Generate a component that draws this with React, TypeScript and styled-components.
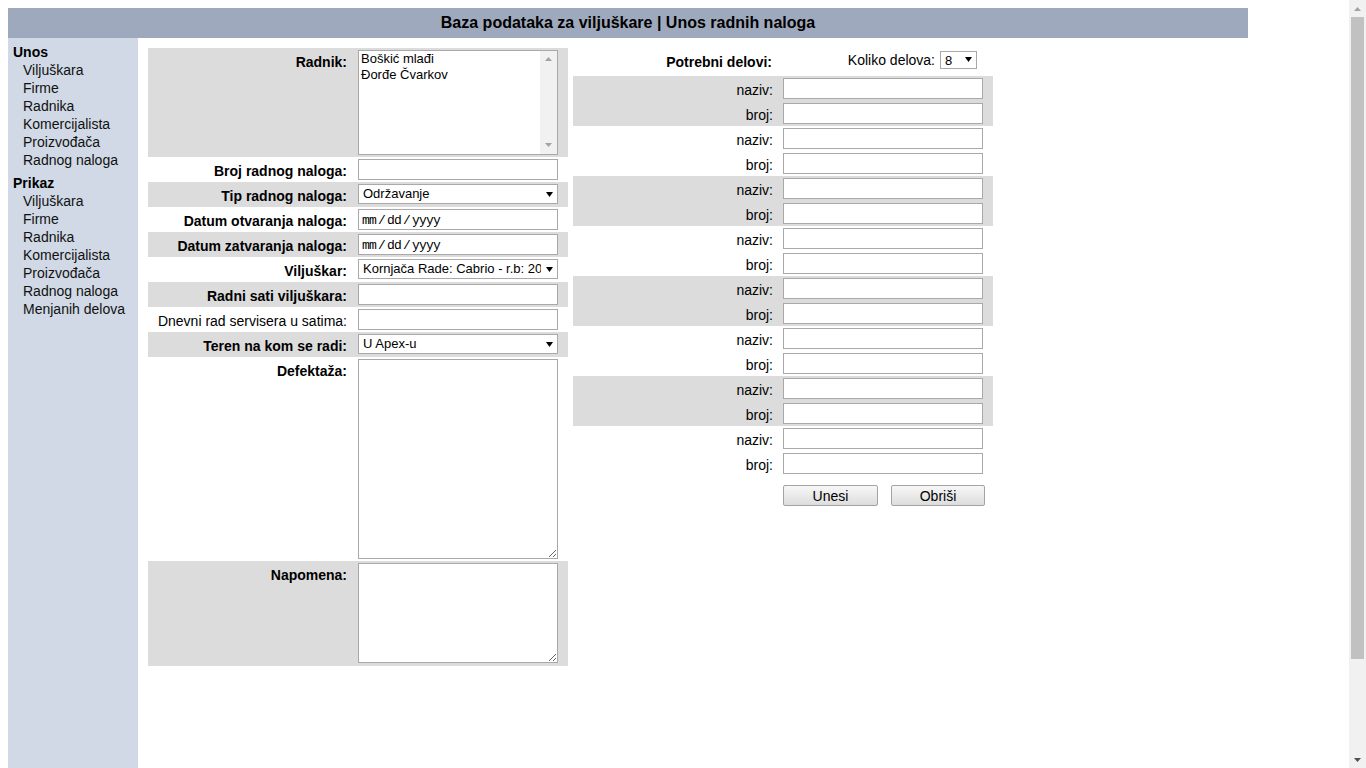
import React from "react";
import styled, { createGlobalStyle, css } from "styled-components";

const GlobalStyle = createGlobalStyle`
  html, body { margin: 0; padding: 0; }
  body {
    margin: 8px;
    background: #ffffff;
    font-family: "Liberation Sans", Arial, sans-serif;
    font-size: 14px;
    color: #000;
  }
`;

const Header = styled.h1`
  width: 1240px;
  height: 30px;
  margin: 0;
  background: #9fa9bd;
  font-size: 16px;
  font-weight: bold;
  line-height: 29px;
  text-align: center;
  color: #000;
`;

const Layout = styled.div`
  width: 1240px;
  height: 832px;
  display: flex;
  align-items: stretch;
`;

const Sidebar = styled.nav`
  width: 130px;
  flex: none;
  background: #d0d9e5;
  padding: 5px 0 0 5px;
  box-sizing: border-box;
  display: flex;
  flex-direction: column;
  gap: 5px;
`;

const NavGroup = styled.div`
  display: flex;
  flex-direction: column;
`;

const NavTitle = styled.div`
  font-weight: bold;
  font-size: 14px;
  line-height: 18px;
`;

const NavLink = styled.a`
  display: block;
  padding-left: 10px;
  font-size: 14px;
  line-height: 18px;
  color: #111;
  text-decoration: none;
`;

const Content = styled.main`
  flex: 1;
  display: flex;
  align-items: flex-start;
  gap: 5px;
  padding: 10px 0 0 10px;
`;

const Table = styled.div`
  width: 420px;
  display: flex;
  flex-direction: column;
`;

const shade = css<{ $shade?: boolean }>`
  background: ${(p) => (p.$shade ? "#dcdcdc" : "transparent")};
`;

const FormRow = styled.div<{ $shade?: boolean; $pb?: number }>`
  display: grid;
  grid-template-columns: 210px 200px;
  min-height: 25px;
  box-sizing: border-box;
  padding: 2px 0 ${(p) => p.$pb ?? 2}px 0;
  ${shade}
`;

const Label = styled.label<{ $plain?: boolean; $pt?: number }>`
  text-align: right;
  padding: ${(p) => p.$pt ?? 4}px 11px 0 0;
  font-size: 14px;
  line-height: 16px;
  font-weight: ${(p) => (p.$plain ? "normal" : "bold")};
  white-space: nowrap;
`;

const fieldBase = css`
  box-sizing: border-box;
  width: 200px;
  margin: 0;
  border: 1px solid #a9a9a9;
  border-radius: 0;
  background: #fff;
  font-family: "Liberation Sans", Arial, sans-serif;
  font-size: 13px;
  color: #000;
  outline: none;
`;

const TextInput = styled.input`
  ${fieldBase}
  height: 21px;
  padding: 1px 3px;
`;

const DateInput = styled.input`
  ${fieldBase}
  height: 21px;
  padding: 2px 3px 0 3px;
  font-family: "Liberation Mono", "DejaVu Sans Mono", monospace;
  font-size: 13px;
  letter-spacing: -0.8px;
  word-spacing: -5px;
`;

const TextArea = styled.textarea<{ $h: number }>`
  ${fieldBase}
  height: ${(p) => p.$h}px;
  padding: 2px;
  resize: both;
  display: block;
`;

const SelectWrap = styled.div<{ $w?: number }>`
  position: relative;
  width: ${(p) => p.$w ?? 200}px;
  display: inline-block;
`;

const NativeSelect = styled.select<{ $h?: number }>`
  ${fieldBase}
  width: 100%;
  height: ${(p) => p.$h ?? 20}px;
  padding: 0 16px 0 4px;
  appearance: none;
  -webkit-appearance: none;
  line-height: 18px;
  display: block;
`;

const SelectArrow = styled.svg`
  position: absolute;
  right: 5px;
  top: 50%;
  margin-top: -3px;
  width: 7px;
  height: 5px;
  pointer-events: none;
`;

const ListBox = styled.div`
  box-sizing: border-box;
  width: 200px;
  height: 105px;
  border: 1px solid #a9a9a9;
  background: #fff;
  display: flex;
`;

const Options = styled.div`
  flex: 1;
  padding: 0 2px;
  font-size: 13px;
  line-height: 16px;
`;

const ScrollLane = styled.div`
  width: 17px;
  flex: none;
  background: #f1f1f1;
  display: flex;
  flex-direction: column;
  align-items: center;
  justify-content: space-between;
  padding: 6px 0 7px;
  box-sizing: border-box;
`;

const LaneArrow = styled.svg`
  width: 7px;
  height: 4px;
  display: block;
`;

const PartsHead = styled.div`
  display: grid;
  grid-template-columns: 210px 210px;
  height: 28px;
`;

const HeadRight = styled.div`
  display: flex;
  justify-content: flex-end;
  align-items: center;
  gap: 5px;
  padding: 3px 16px 0 0;
  height: 17px;
  font-size: 14px;
`;

const PartGroup = styled.div<{ $shade?: boolean }>`
  display: flex;
  flex-direction: column;
  ${shade}
`;

const PartRow = styled.div`
  display: grid;
  grid-template-columns: 210px 200px;
  height: 25px;
  box-sizing: border-box;
  padding: 2px 0;
`;

const PartLabel = styled.label`
  text-align: right;
  padding: 4px 10px 0 0;
  font-size: 14px;
  line-height: 16px;
`;

const Actions = styled.div`
  display: grid;
  grid-template-columns: 210px auto;
  padding-top: 9px;
`;

const ButtonBar = styled.div`
  display: flex;
  gap: 13px;
`;

const Button = styled.button<{ $w: number }>`
  width: ${(p) => p.$w}px;
  height: 21px;
  margin: 0;
  padding: 0;
  border: 1px solid #a3a3a3;
  border-radius: 2px;
  background: linear-gradient(#f7f7f7, #dddddd);
  font-family: "Liberation Sans", Arial, sans-serif;
  font-size: 14px;
  color: #000;
`;

/* drawing of the window's vertical scrollbar, laid over the page edge */
const PageScrollbar = styled.div`
  position: fixed;
  top: 0;
  right: 0;
  width: 17px;
  height: 100vh;
  background: #f1f1f1;
  display: flex;
  flex-direction: column;
  align-items: center;
`;

const ScrollBtn = styled.div`
  height: 17px;
  width: 17px;
  display: flex;
  align-items: center;
  justify-content: center;
  flex: none;
`;

const ScrollThumbArea = styled.div`
  flex: 1;
  width: 100%;
  display: flex;
  justify-content: center;
`;

const ScrollThumb = styled.div`
  width: 13px;
  height: 642px;
  background: #c1c1c1;
`;

const Arrow = () => (
  <SelectArrow viewBox="0 0 7 5">
    <polygon points="0,0 7,0 3.5,5" fill="#000" />
  </SelectArrow>
);

const Select: React.FC<{ value: string; w?: number; h?: number }> = ({ value, w, h }) => (
  <SelectWrap $w={w}>
    <NativeSelect $h={h} defaultValue={value}>
      <option>{value}</option>
    </NativeSelect>
    <Arrow />
  </SelectWrap>
);

const unosLinks = ["Viljuškara", "Firme", "Radnika", "Komercijalista", "Proizvođača", "Radnog naloga"];
const prikazLinks = [...unosLinks, "Menjanih delova"];

export default function App() {
  return (
    <>
      <GlobalStyle />
      <Header>Baza podataka za viljuškare | Unos radnih naloga</Header>
      <Layout>
        <Sidebar>
          <NavGroup>
            <NavTitle>Unos</NavTitle>
            {unosLinks.map((l) => (
              <NavLink key={l} href="#">{l}</NavLink>
            ))}
          </NavGroup>
          <NavGroup>
            <NavTitle>Prikaz</NavTitle>
            {prikazLinks.map((l) => (
              <NavLink key={l} href="#">{l}</NavLink>
            ))}
          </NavGroup>
        </Sidebar>
        <Content>
          <Table>
            <FormRow $shade>
              <Label>Radnik:</Label>
              <ListBox role="listbox">
                <Options>
                  <div>Boškić mlađi</div>
                  <div>Đorđe Čvarkov</div>
                </Options>
                <ScrollLane>
                  <LaneArrow viewBox="0 0 7 4">
                    <polygon points="0,4 7,4 3.5,0" fill="#a3a3a3" />
                  </LaneArrow>
                  <LaneArrow viewBox="0 0 7 4">
                    <polygon points="0,0 7,0 3.5,4" fill="#a3a3a3" />
                  </LaneArrow>
                </ScrollLane>
              </ListBox>
            </FormRow>
            <FormRow>
              <Label>Broj radnog naloga:</Label>
              <TextInput />
            </FormRow>
            <FormRow $shade>
              <Label>Tip radnog naloga:</Label>
              <Select value="Održavanje" />
            </FormRow>
            <FormRow>
              <Label>Datum otvaranja naloga:</Label>
              <DateInput readOnly value="mm / dd / yyyy" />
            </FormRow>
            <FormRow $shade>
              <Label>Datum zatvaranja naloga:</Label>
              <DateInput readOnly value="mm / dd / yyyy" />
            </FormRow>
            <FormRow>
              <Label>Viljuškar:</Label>
              <Select value="Kornjača Rade: Cabrio - r.b: 2012" />
            </FormRow>
            <FormRow $shade>
              <Label>Radni sati viljuškara:</Label>
              <TextInput />
            </FormRow>
            <FormRow>
              <Label $plain>Dnevni rad servisera u satima:</Label>
              <TextInput />
            </FormRow>
            <FormRow $shade>
              <Label>Teren na kom se radi:</Label>
              <Select value="U Apex-u" />
            </FormRow>
            <FormRow>
              <Label>Defektaža:</Label>
              <TextArea $h={200} />
            </FormRow>
            <FormRow $shade $pb={3}>
              <Label>Napomena:</Label>
              <TextArea $h={100} />
            </FormRow>
          </Table>
          <Table>
            <PartsHead>
              <Label $pt={6}>Potrebni delovi:</Label>
              <HeadRight>
                <span>Koliko delova:</span>
                <Select value="8" w={37} h={18} />
              </HeadRight>
            </PartsHead>
            {Array.from({ length: 8 }).map((_, i) => (
              <PartGroup key={i} $shade={i % 2 === 0}>
                <PartRow>
                  <PartLabel>naziv:</PartLabel>
                  <TextInput />
                </PartRow>
                <PartRow>
                  <PartLabel>broj:</PartLabel>
                  <TextInput />
                </PartRow>
              </PartGroup>
            ))}
            <Actions>
              <span />
              <ButtonBar>
                <Button $w={95}>Unesi</Button>
                <Button $w={94}>Obriši</Button>
              </ButtonBar>
            </Actions>
          </Table>
        </Content>
      </Layout>
      <PageScrollbar aria-hidden="true">
        <ScrollBtn>
          <svg width="7" height="4" viewBox="0 0 7 4">
            <polygon points="0,4 7,4 3.5,0" fill="#a3a3a3" />
          </svg>
        </ScrollBtn>
        <ScrollThumbArea>
          <ScrollThumb />
        </ScrollThumbArea>
        <ScrollBtn>
          <svg width="7" height="4" viewBox="0 0 7 4">
            <polygon points="0,0 7,0 3.5,4" fill="#505050" />
          </svg>
        </ScrollBtn>
      </PageScrollbar>
    </>
  );
}
